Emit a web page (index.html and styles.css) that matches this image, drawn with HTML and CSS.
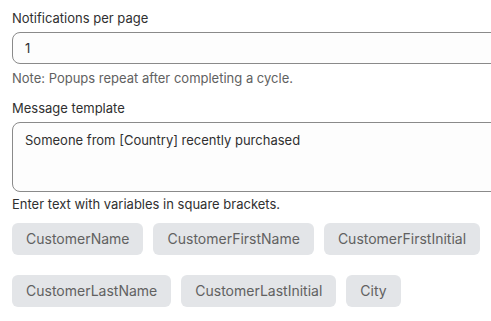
FILE: index.html
```html
<!DOCTYPE html>
<html lang="en">
<head>
    <meta charset="UTF-8">
    <meta name="viewport" content="width=device-width, initial-scale=1.0">
    <title>Notification settings</title>
    <link rel="stylesheet" href="styles.css">
</head>
<body>
    <div class="settings">
        <div class="field">
            <label for="per-page">Notifications per page</label>
            <input type="text" id="per-page" value="1">
            <p class="note">Note: Popups repeat after completing a cycle.</p>
        </div>
        <div class="field">
            <label for="template">Message template</label>
            <textarea id="template">Someone from [Country] recently purchased</textarea>
            <p class="help">Enter text with variables in square brackets.</p>
        </div>
        <div class="variables">
            <button type="button" class="chip">CustomerName</button>
            <button type="button" class="chip">CustomerFirstName</button>
            <button type="button" class="chip">CustomerFirstInitial</button>
            <button type="button" class="chip">CustomerLastName</button>
            <button type="button" class="chip">CustomerLastInitial</button>
            <button type="button" class="chip">City</button>
        </div>
    </div>
</body>
</html>
```

FILE: styles.css
```css
body {
    font-family: Inter, "Noto Sans", sans-serif;
    font-size: 13px;
    line-height: 20px;
    color: #303030;
    background-color: #fff;
    margin: 0;
    overflow: hidden;
}
.settings {
    padding: 8px 0 0 12px;
    width: 520px;
}
.field {
    display: flex;
    flex-direction: column;
    margin-bottom: 10px;
}
label {
    margin-bottom: 4px;
}
input[type="text"],
textarea {
    font-family: inherit;
    font-size: 13px;
    line-height: 20px;
    color: #303030;
    background-color: #fdfdfd;
    border: 1px solid #8a8a8a;
    border-radius: 8px;
    padding: 5px 12px;
    margin: 0;
    box-sizing: border-box;
    width: 100%;
}
input[type="text"] {
    height: 32px;
}
textarea {
    height: 70px;
    padding-top: 7px;
    resize: none;
}
.note {
    margin: 4px 0 0;
    color: #616161;
}
.help {
    margin: 2px 0 0;
}
.field:nth-child(2) {
    margin-bottom: 9px;
}
.variables {
    display: flex;
    flex-wrap: wrap;
    gap: 20px 10px;
    width: 480px;
}
.chip {
    font-family: inherit;
    font-size: 14px;
    line-height: 20px;
    color: #616161;
    background-color: #e3e5e8;
    border: none;
    border-radius: 6px;
    height: 32px;
    padding: 0 14px;
    cursor: pointer;
}
.chip:hover {
    background-color: #d6d9dd;
}
```
